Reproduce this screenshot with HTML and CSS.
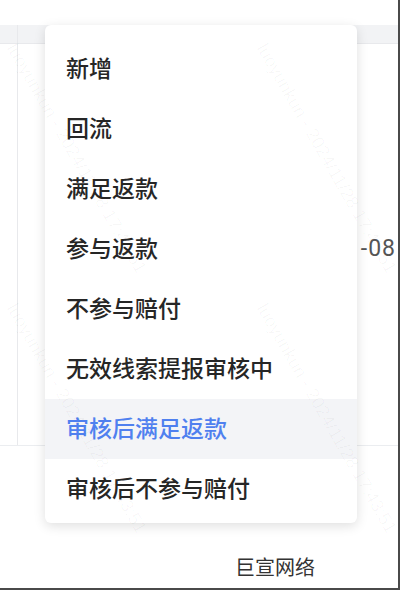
FILE: index.html
```html
<!DOCTYPE html>
<html lang="zh-CN">
<head>
    <meta charset="UTF-8">
    <meta name="viewport" content="width=device-width, initial-scale=1.0">
    <title>状态选择</title>
    <link rel="stylesheet" href="styles.css">
</head>
<body>

    <div class="screen">
        <!-- 表格背景 -->
        <div class="table">
            <div class="table-head">
                <div class="cell-first"></div>
                <div class="cell-rest"></div>
            </div>
            <div class="table-body">
                <div class="cell-first"></div>
                <div class="cell-rest">
                    <span class="date">2024-11-08</span>
                </div>
            </div>
        </div>

        <div class="footer">巨宣网络</div>

        <!-- 下拉菜单 -->
        <ul class="dropdown">
            <li class="option">新增</li>
            <li class="option">回流</li>
            <li class="option">满足返款</li>
            <li class="option">参与返款</li>
            <li class="option">不参与赔付</li>
            <li class="option">无效线索提报审核中</li>
            <li class="option active">审核后满足返款</li>
            <li class="option">审核后不参与赔付</li>
        </ul>

        <!-- 水印 -->
        <div class="watermark">
            <span class="wm" style="left: 20px; top: 40px;">luoyunkun - 2024/11/28 17:43:51</span>
            <span class="wm" style="left: 20px; top: 300px;">luoyunkun - 2024/11/28 17:43:51</span>
            <span class="wm" style="left: 270px; top: 40px;">luoyunkun - 2024/11/28 17:43:51</span>
            <span class="wm" style="left: 270px; top: 300px;">luoyunkun - 2024/11/28 17:43:51</span>
        </div>
    </div>

</body>
</html>
```

FILE: styles.css
```css
* {
    box-sizing: border-box;
}

body {
    margin: 0;
    background-color: #ffffff;
    font-family: "Noto Sans CJK SC", "Noto Sans", sans-serif;
}

.screen {
    position: relative;
    width: 400px;
    height: 590px;
    overflow: hidden;
    background-color: #ffffff;
    border-right: 2px solid #4a4a4a;
    border-bottom: 2px solid #4a4a4a;
}

/* 表格 */
.table {
    margin-top: 25px;
    border-bottom: 1px solid #ebedf0;
}

.table-head {
    display: flex;
    height: 19px;
    background-color: #f2f3f5;
    border-bottom: 1px solid #e8e9ec;
}

.table-body {
    display: flex;
    height: 401px;
}

.cell-first {
    width: 18px;
    border-right: 1px solid #e8e9ec;
}

.cell-rest {
    flex: 1;
    display: flex;
    justify-content: flex-end;
    overflow: hidden;
}

.date {
    margin-top: 190px;
    padding-right: 2px;
    font-family: Roboto, "Liberation Sans", sans-serif;
    font-size: 23px;
    line-height: 30px;
    letter-spacing: 1px;
    color: #555555;
    white-space: nowrap;
}

/* 底部文字 */
.footer {
    margin-top: 107px;
    padding-left: 235px;
    font-size: 20px;
    line-height: 28px;
    color: #333333;
}

/* 下拉菜单 */
.dropdown {
    position: absolute;
    top: 25px;
    left: 45px;
    width: 312px;
    margin: 0;
    padding: 14px 0 4px;
    list-style: none;
    background-color: #ffffff;
    border-radius: 6px;
    box-shadow: 0 3px 12px rgba(0, 0, 0, 0.13);
}

.option {
    height: 60px;
    padding-left: 21px;
    font-size: 23px;
    font-weight: 500;
    line-height: 56px;
    color: #262626;
    white-space: nowrap;
}

.option.active {
    background-color: #f3f4f7;
    color: #4f80ef;
}

/* 水印 */
.watermark {
    position: absolute;
    inset: 0;
    pointer-events: none;
}

.wm {
    position: absolute;
    font-family: "Liberation Sans", sans-serif;
    font-size: 18px;
    color: rgba(0, 0, 0, 0.03);
    white-space: nowrap;
    transform: rotate(60deg);
    transform-origin: left top;
}
```
